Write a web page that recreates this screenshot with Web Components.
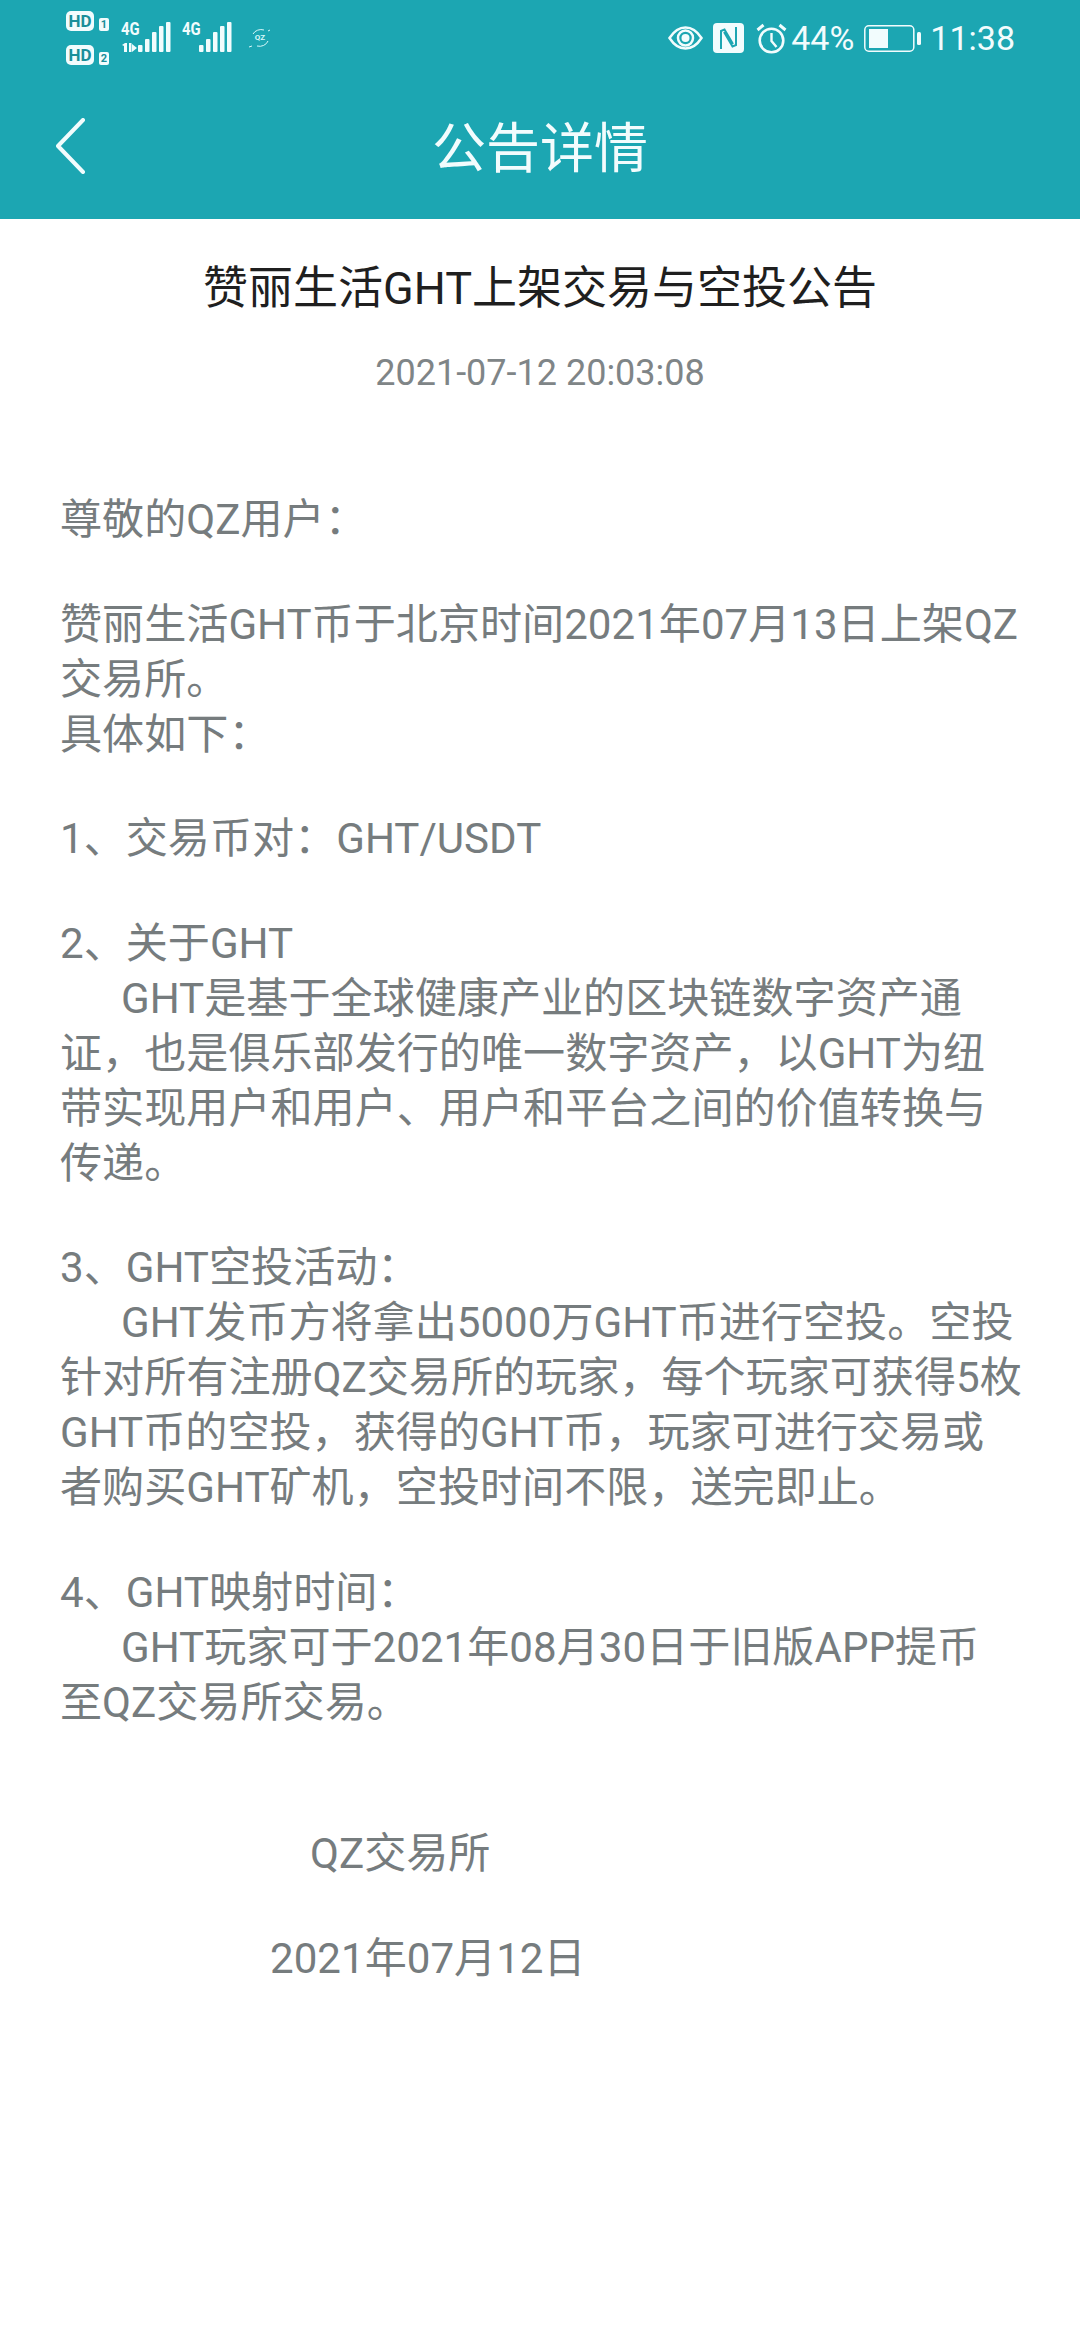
<!DOCTYPE html>
<html lang="zh-CN">
<head>
<meta charset="utf-8">
<title>公告详情</title>
<style>
    html, body { margin: 0; padding: 0; background: #fff; }
    body { width: 1080px; height: 2340px; overflow: hidden; font-family: Roboto, "Noto Sans CJK SC", sans-serif; }
</style>
</head>
<body>
<notice-page>
    <app-header title-text="公告详情"></app-header>
    <notice-article title-text="赞丽生活GHT上架交易与空投公告" date="2021-07-12 20:03:08">
        <notice-line>尊敬的QZ用户：</notice-line>
        <notice-line gap>赞丽生活GHT币于北京时间2021年07月13日上架QZ</notice-line>
        <notice-line>交易所。</notice-line>
        <notice-line>具体如下：</notice-line>
        <notice-line gap>1、交易币对：GHT/USDT</notice-line>
        <notice-line gap>2、关于GHT</notice-line>
        <notice-line indent>GHT是基于全球健康产业的区块链数字资产通</notice-line>
        <notice-line>证，也是俱乐部发行的唯一数字资产，以GHT为纽</notice-line>
        <notice-line>带实现用户和用户、用户和平台之间的价值转换与</notice-line>
        <notice-line>传递。</notice-line>
        <notice-line gap>3、GHT空投活动：</notice-line>
        <notice-line indent>GHT发币方将拿出5000万GHT币进行空投。空投</notice-line>
        <notice-line>针对所有注册QZ交易所的玩家，每个玩家可获得5枚</notice-line>
        <notice-line>GHT币的空投，获得的GHT币，玩家可进行交易或</notice-line>
        <notice-line>者购买GHT矿机，空投时间不限，送完即止。</notice-line>
        <notice-line gap>4、GHT映射时间：</notice-line>
        <notice-line indent>GHT玩家可于2021年08月30日于旧版APP提币</notice-line>
        <notice-line>至QZ交易所交易。</notice-line>
        <notice-sign name="QZ交易所" date="2021年07月12日"></notice-sign>
    </notice-article>
</notice-page>

<script>
// --- Status bar + title bar ---
class AppHeader extends HTMLElement {
    constructor() {
        super();
        this.attachShadow({ mode: 'open' });
    }

    connectedCallback() {
        const title = this.getAttribute('title-text') || '';
        const bars = [7, 13, 20, 26, 30].map((h, i) =>
            `<rect x="${17 + i * 7}" y="${30 - h}" width="4.500" height="${h}" rx="1"/>`).join('');

        this.shadowRoot.innerHTML = `
            <style>
                :host { display: block; background: #1ca6b2; color: #f2fcfd; height: 219px; }
                .status { display: flex; justify-content: space-between; align-items: flex-start; height: 73px; padding: 0 65px 0 66px; }
                .left { display: flex; align-items: flex-start; padding-top: 11px; }
                .sims { display: flex; flex-direction: column; gap: 14px; margin-right: 12px; }
                .sim { display: flex; align-items: flex-end; gap: 5px; }
                .hd { font: 700 17px/20px Roboto, sans-serif; width: 28px; height: 20px; text-align: center; border-radius: 5px; background: #f2fcfd; color: #1a8f9a; }
                .num { font: 700 11px/13px Roboto, sans-serif; width: 10px; height: 13px; text-align: center; border-radius: 2px; background: #f2fcfd; color: #1a8f9a; }
                .signals { display: flex; gap: 11px; margin-top: 11px; }
                .sig { position: relative; display: block; width: 50px; height: 30px; }
                .sig svg { display: block; }
                .sig b { position: absolute; left: 0; top: 0; font: 700 19px/14px Roboto, sans-serif; transform: scaleX(.78); transform-origin: left; }
                .app { position: relative; width: 24px; height: 20px; margin: 17px 0 0 16px; }
                .app svg { position: absolute; left: 0; top: 0; }
                .app span { display: block; font: 700 8px/20px Roboto, sans-serif; text-align: center; color: #d8f8fa; }
                .right { display: flex; align-items: center; height: 76px; }
                .right svg { flex: none; }
                .txt { font: 400 34px/1 Roboto, sans-serif; }
                .bar { display: grid; grid-template-columns: 100px 1fr 100px; align-items: center; height: 146px; }
                .back { padding-left: 56px; display: flex; }
                .back svg { flex: none; }
                h1 { margin: 0; padding-top: 7px; font: 400 54px/1 Roboto, "Noto Sans CJK SC", sans-serif; text-align: center; }
            </style>
            <div class="status">
                <div class="left">
                    <div class="sims">
                        <div class="sim"><span class="hd">HD</span><span class="num">1</span></div>
                        <div class="sim"><span class="hd">HD</span><span class="num">2</span></div>
                    </div>
                    <div class="signals">
                        <span class="sig"><b>4G</b><svg width="50" height="30" fill="#f2fcfd">
                            ${bars}
                            <path d="M1 23l3-2h2v9H3v-6zM8 21h2.500v9H8zM11 22l5 4-5 4z"/>
                        </svg></span>
                        <span class="sig"><b>4G</b><svg width="50" height="30" fill="#f2fcfd">
                            ${bars}
                        </svg></span>
                    </div>
                    <div class="app">
                        <svg width="24" height="20" fill="none" stroke="#d8f8fa" stroke-width="1">
                            <path d="M5 6a9 8 0 0 1 11-4M20 3l2-1M20 13a9 8 0 0 1-11 5M1 19l3-1"/>
                        </svg>
                        <span>QZ</span>
                    </div>
                </div>
                <div class="right">
                    <svg width="35" height="24" viewBox="0 0 35 24">
                        <path d="M1.500 12C6 5 11 1.500 17.500 1.500S29 5 33.500 12C29 19 24 22.500 17.500 22.500S6 19 1.500 12z" fill="none" stroke="#f2fcfd" stroke-width="2.500"/>
                        <circle cx="17.500" cy="12" r="7.500" fill="none" stroke="#f2fcfd" stroke-width="2.500"/>
                        <circle cx="17.500" cy="12" r="4" fill="#f2fcfd"/>
                    </svg>
                    <svg width="31" height="30" viewBox="0 0 31 30" style="margin-left:10px">
                        <rect width="31" height="30" rx="4" fill="#f2fcfd"/>
                        <path d="M8 26V8l3.500-1.500L20 21M23 4v18l-3.500 1.500L11 9" fill="none" stroke="#1ca6b2" stroke-width="2"/>
                    </svg>
                    <svg width="31" height="31" viewBox="0 0 31 31" style="margin-left:12px">
                        <circle cx="15.500" cy="17.500" r="11.800" fill="none" stroke="#f2fcfd" stroke-width="2.600"/>
                        <path d="M15.500 10v8l5 6" fill="none" stroke="#f2fcfd" stroke-width="2.400"/>
                        <path d="M1.500 7l6-5M29.500 7l-6-5" fill="none" stroke="#f2fcfd" stroke-width="3"/>
                    </svg>
                    <span class="txt" style="margin-left:4px">44%</span>
                    <svg width="57" height="27" viewBox="0 0 57 27" style="margin-left:10px">
                        <rect x=".8" y=".8" width="49" height="25.400" rx="4" fill="none" stroke="#f2fcfd" stroke-width="1.500"/>
                        <rect x="5" y="4" width="19" height="19" fill="#f2fcfd"/>
                        <rect x="53" y="7" width="4" height="13" rx="1.500" fill="#f2fcfd"/>
                    </svg>
                    <span class="txt" style="margin-left:9px">11:38</span>
                </div>
            </div>
            <div class="bar">
                <div class="back">
                    <svg width="30" height="56" viewBox="0 0 30 56" fill="none" stroke="#f2fcfd" stroke-width="4" stroke-linecap="round" stroke-linejoin="round">
                        <path d="M27 2 2 28l25 26"/>
                    </svg>
                </div>
                <h1>${title}</h1>
                <div></div>
            </div>
        `;
    }
}
customElements.define('app-header', AppHeader);

// --- One line of the notice body ---
class NoticeLine extends HTMLElement {
    constructor() {
        super();
        this.attachShadow({ mode: 'open' });
        this.shadowRoot.innerHTML = `
            <style>
                :host { display: block; white-space: nowrap; height: 55px; line-height: 55px; }
                :host([gap]) { margin-top: 49.6px; }
                :host([indent]) { padding-left: 61px; }
            </style>
            <slot></slot>
        `;
    }
}
customElements.define('notice-line', NoticeLine);

// --- Signature block at the bottom ---
class NoticeSign extends HTMLElement {
    constructor() {
        super();
        this.attachShadow({ mode: 'open' });
    }

    connectedCallback() {
        this.shadowRoot.innerHTML = `
            <style>
                :host { display: block; margin-top: 96px; }
                div { white-space: nowrap; line-height: 55px; }
                .name { padding-left: 250px; }
                .date { padding-left: 210px; margin-top: 50px; }
            </style>
            <div class="name">${this.getAttribute('name')}</div>
            <div class="date">${this.getAttribute('date')}</div>
        `;
    }
}
customElements.define('notice-sign', NoticeSign);

// --- Article: heading, timestamp, body ---
class NoticeArticle extends HTMLElement {
    constructor() {
        super();
        this.attachShadow({ mode: 'open' });
    }

    connectedCallback() {
        this.shadowRoot.innerHTML = `
            <style>
                :host { display: block; padding-top: 42px; }
                h2 { margin: 0; font-weight: 400; font-size: 45px; line-height: 56px; text-align: center; color: #1f1f1f; }
                .date { margin-top: 34px; font-size: 36px; line-height: 44px; text-align: center; color: #7f8587; }
                .body { margin-top: 97px; padding: 0 0 0 60px; font-size: 42.1px; color: #767c7e; }
            </style>
            <h2>${this.getAttribute('title-text')}</h2>
            <div class="date">${this.getAttribute('date')}</div>
            <div class="body"><slot></slot></div>
        `;
    }
}
customElements.define('notice-article', NoticeArticle);

// --- Page shell ---
class NoticePage extends HTMLElement {
    constructor() {
        super();
        this.attachShadow({ mode: 'open' });
        this.shadowRoot.innerHTML = `
            <style>
                :host { display: block; width: 1080px; height: 2340px; background: #fff; }
            </style>
            <slot></slot>
        `;
    }
}
customElements.define('notice-page', NoticePage);
</script>
</body>
</html>
